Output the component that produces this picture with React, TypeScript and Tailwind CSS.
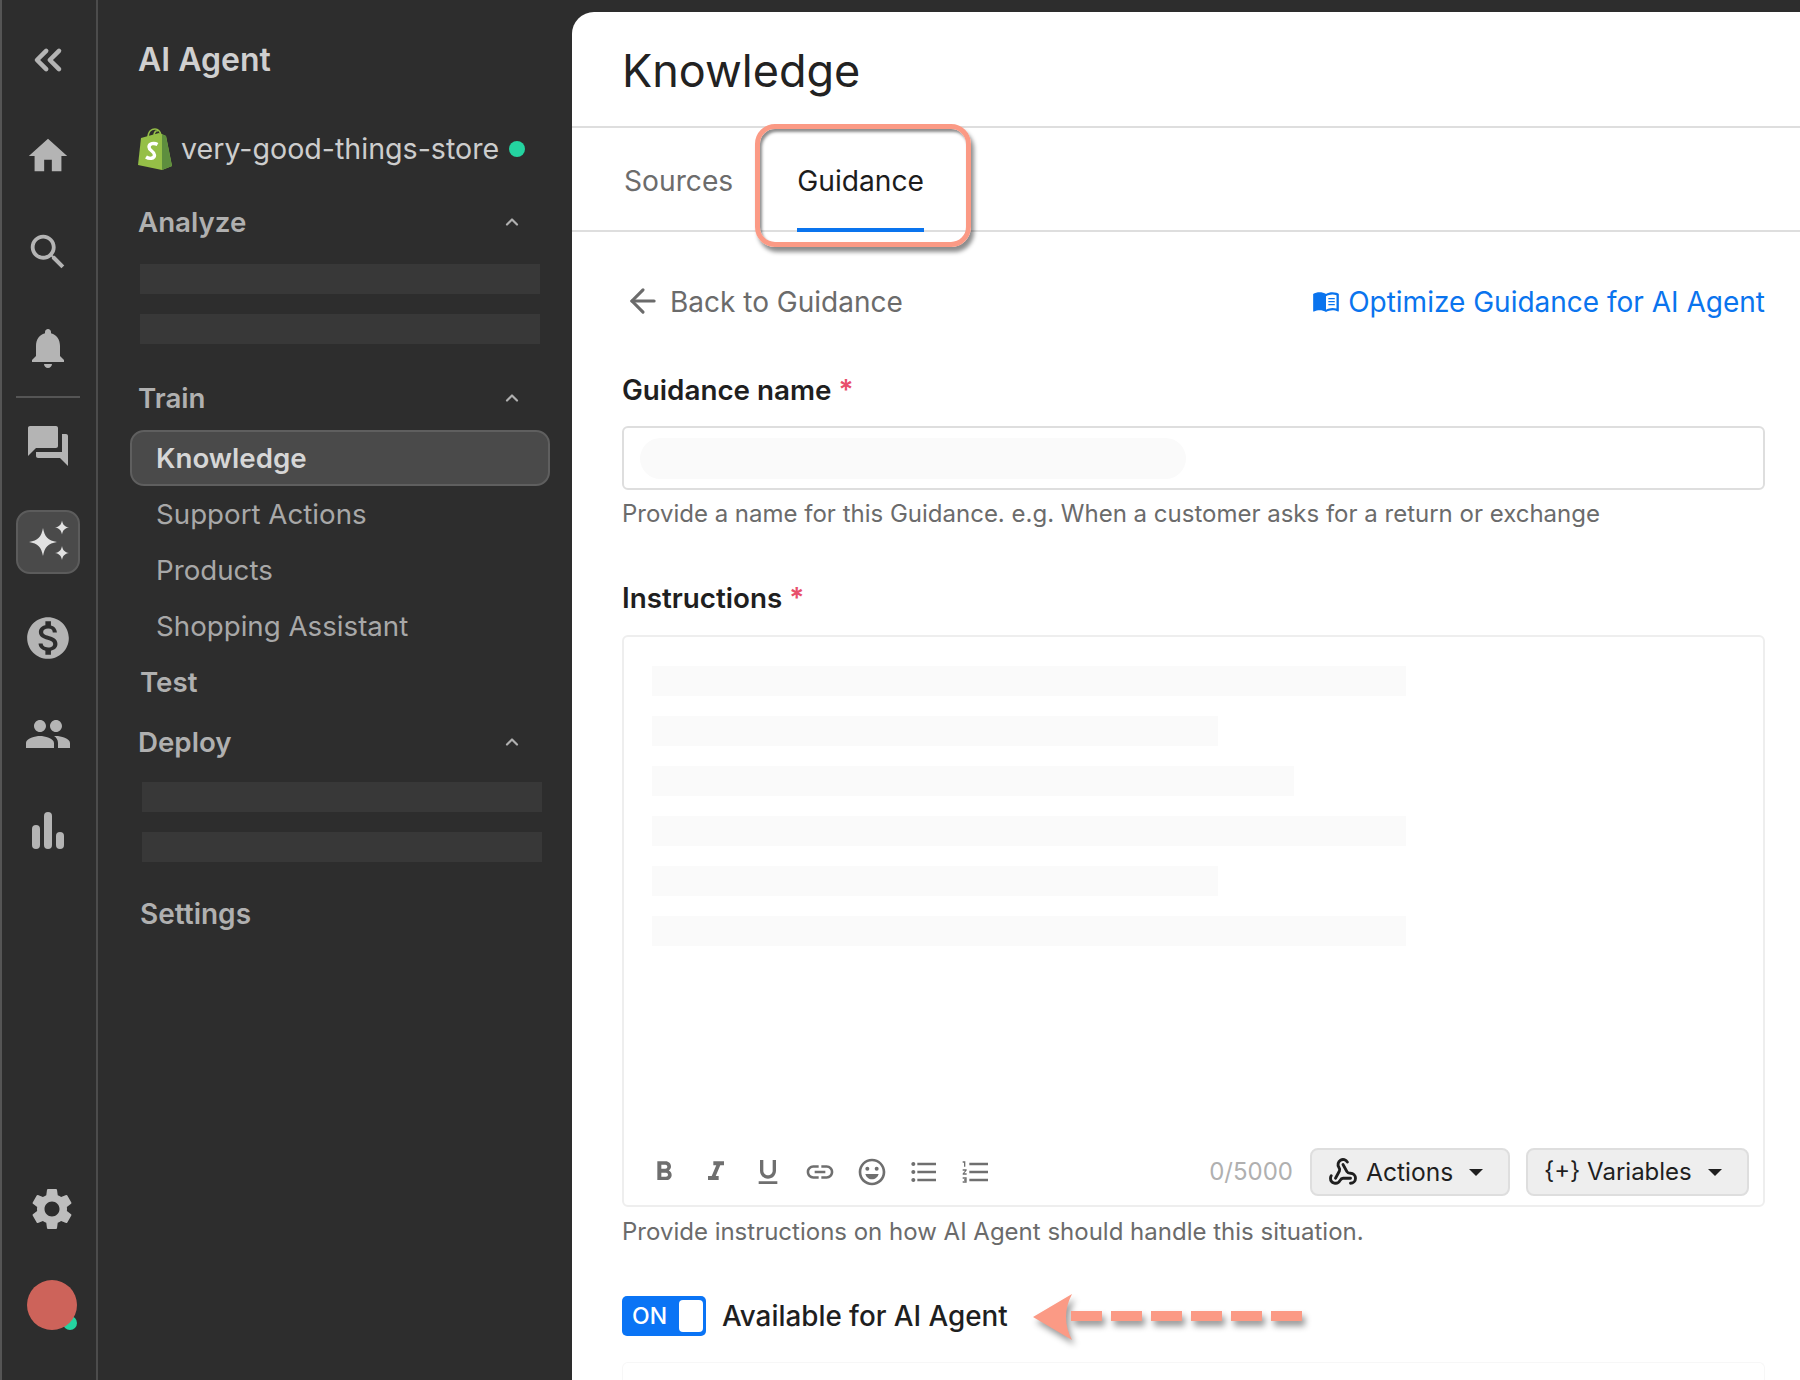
import { ChevronUp, Webhook, ArrowLeft, ChevronsLeft } from "lucide-react";

const P = ({ d, className }: { d: string; className: string }) => (
  <svg viewBox="0 0 24 24" fill="currentColor" className={className}>
    <path d={d} />
  </svg>
);

const icons = {
  home: "M10 20v-6h4v6h5v-8h3L12 3 2 12h3v8z",
  search:
    "M15.5 14h-.79l-.28-.27C15.41 12.59 16 11.11 16 9.5 16 5.91 13.09 3 9.5 3S3 5.91 3 9.5 5.91 16 9.5 16c1.61 0 3.09-.59 4.23-1.57l.27.28v.79l5 4.99L20.49 19l-4.99-5zm-6 0C7.01 14 5 11.99 5 9.5S7.01 5 9.5 5 14 7.01 14 9.5 11.99 14 9.5 14z",
  bell: "M12 22c1.1 0 2-.9 2-2h-4c0 1.1.89 2 2 2zm6-6v-5c0-3.07-1.64-5.64-4.5-6.32V4c0-.83-.67-1.5-1.5-1.5s-1.5.67-1.5 1.5v.68C7.63 5.36 6 7.92 6 11v5l-2 2v1h16v-1l-2-2z",
  forum:
    "M21 6h-2v9H6v2c0 .55.45 1 1 1h11l4 4V7c0-.55-.45-1-1-1zm-4 6V3c0-.55-.45-1-1-1H3c-.55 0-1 .45-1 1v14l4-4h10c.55 0 1-.45 1-1z",
  money:
    "M12 2C6.48 2 2 6.48 2 12s4.48 10 10 10 10-4.48 10-10S17.52 2 12 2zm1.41 16.09V20h-2.67v-1.93c-1.71-.36-3.16-1.46-3.27-3.4h1.96c.1 1.05.82 1.87 2.65 1.87 1.96 0 2.4-.98 2.4-1.59 0-.83-.44-1.61-2.67-2.14-2.48-.6-4.18-1.62-4.18-3.67 0-1.72 1.39-2.84 3.11-3.21V4h2.67v1.95c1.86.45 2.79 1.86 2.87 3.39H14.3c-.05-1.11-.64-1.87-2.22-1.87-1.5 0-2.4.68-2.4 1.64 0 .84.65 1.39 2.67 1.91s4.18 1.39 4.18 3.91c-.01 1.83-1.38 2.83-3.12 3.16z",
  people:
    "M16 11c1.66 0 2.99-1.34 2.99-3S17.66 5 16 5c-1.66 0-3 1.34-3 3s1.34 3 3 3zm-8 0c1.66 0 2.99-1.34 2.99-3S9.66 5 8 5C6.34 5 5 6.34 5 8s1.34 3 3 3zm0 2c-2.33 0-7 1.17-7 3.5V19h14v-2.5c0-2.33-4.67-3.5-7-3.5zm8 0c-.29 0-.62.02-.97.05 1.16.84 1.97 1.97 1.97 3.45V19h6v-2.5c0-2.33-4.67-3.5-7-3.5z",
  gear: "M19.14 12.94c.04-.3.06-.61.06-.94 0-.32-.02-.64-.07-.94l2.03-1.58c.18-.14.23-.41.12-.61l-1.92-3.32c-.12-.22-.37-.29-.59-.22l-2.39.96c-.5-.38-1.03-.7-1.62-.94l-.36-2.54c-.04-.24-.24-.41-.48-.41h-3.84c-.24 0-.43.17-.47.41l-.36 2.54c-.59.24-1.13.57-1.62.94l-2.39-.96c-.22-.08-.47 0-.59.22L2.74 8.87c-.12.21-.08.47.12.61l2.03 1.58c-.05.3-.09.63-.09.94s.02.64.07.94l-2.03 1.58c-.18.14-.23.41-.12.61l1.92 3.32c.12.22.37.29.59.22l2.39-.96c.5.38 1.03.7 1.62.94l.36 2.54c.05.24.24.41.48.41h3.84c.24 0 .44-.17.47-.41l.36-2.54c.59-.24 1.13-.56 1.62-.94l2.39.96c.22.08.47 0 .59-.22l1.92-3.32c.12-.22.07-.47-.12-.61l-2.01-1.58zM12 15.6c-1.98 0-3.6-1.62-3.6-3.6s1.62-3.6 3.6-3.6 3.6 1.62 3.6 3.6-1.62 3.6-3.6 3.6z",
  bold: "M15.6 10.79c.97-.67 1.65-1.77 1.65-2.79 0-2.26-1.75-4-4-4H7v14h7.04c2.09 0 3.71-1.7 3.71-3.79 0-1.52-.86-2.82-2.15-3.42zM10 6.5h3c.83 0 1.5.67 1.5 1.5s-.67 1.5-1.5 1.5h-3v-3zm3.5 9H10v-3h3.5c.83 0 1.5.67 1.5 1.5s-.67 1.5-1.5 1.5z",
  italic: "M10 4v3h2.21l-3.42 8H6v3h8v-3h-2.21l3.42-8H18V4z",
  underline:
    "M12 17c3.31 0 6-2.69 6-6V3h-2.5v8c0 1.93-1.57 3.5-3.5 3.5S8.5 12.93 8.5 11V3H6v8c0 3.31 2.69 6 6 6zm-7 2v2h14v-2H5z",
  link: "M3.9 12c0-1.71 1.39-3.1 3.1-3.1h4V7H7c-2.76 0-5 2.24-5 5s2.24 5 5 5h4v-1.9H7c-1.71 0-3.1-1.39-3.1-3.1zM8 13h8v-2H8v2zm9-6h-4v1.9h4c1.71 0 3.1 1.39 3.1 3.1s-1.39 3.1-3.1 3.1h-4V17h4c2.76 0 5-2.24 5-5s-2.24-5-5-5z",
  emoji:
    "M11.99 2C6.47 2 2 6.48 2 12s4.47 10 9.99 10C17.52 22 22 17.52 22 12S17.52 2 11.99 2zM12 20c-4.42 0-8-3.58-8-8s3.58-8 8-8 8 3.58 8 8-3.58 8-8 8zM8.5 11a1.5 1.5 0 1 0 0-3 1.5 1.5 0 0 0 0 3zm7 0a1.5 1.5 0 1 0 0-3 1.5 1.5 0 0 0 0 3zM7 13.5h10c-.6 2.3-2.6 4-5 4s-4.4-1.7-5-4z",
  ul: "M4 10.5c-.83 0-1.5.67-1.5 1.5s.67 1.5 1.5 1.5 1.5-.67 1.5-1.5-.67-1.5-1.5-1.5zm0-6c-.83 0-1.5.67-1.5 1.5S3.17 7.5 4 7.5 5.5 6.83 5.5 6 4.83 4.5 4 4.5zm0 12c-.83 0-1.5.68-1.5 1.5s.68 1.5 1.5 1.5 1.5-.68 1.5-1.5-.67-1.5-1.5-1.5zM7 19h14v-2H7v2zm0-6h14v-2H7v2zm0-8v2h14V5H7z",
  ol: "M2 17h2v.5H3v1h1v.5H2v1h3v-4H2v1zm1-9h1V4H2v1h1v3zm-1 3h1.8L2 13.1v.9h3v-1H3.2L5 10.9V10H2v1zm5-6v2h14V5H7zm0 14h14v-2H7v2zm0-6h14v-2H7v2z",
};

const Slot = ({ children }: { children: React.ReactNode }) => (
  <div className="flex h-[96px] items-center justify-center text-[#b4b4b4]">{children}</div>
);

const Rail = () => (
  <div className="flex w-[98px] shrink-0 flex-col items-center border-x-2 border-l-[#555] border-r-[#4c4c4c] pt-3 pb-[27px] pr-[3px]">
    <Slot>
      <ChevronsLeft className="h-[44px] w-[44px]" strokeWidth={2.5} />
    </Slot>
    <Slot>
      <P d={icons.home} className="h-[46px] w-[46px]" />
    </Slot>
    <Slot>
      <P d={icons.search} className="h-[46px] w-[46px]" />
    </Slot>
    <Slot>
      <P d={icons.bell} className="h-[48px] w-[48px]" />
    </Slot>
    <div className="h-[2px] w-[64px] bg-[#555]" />
    <Slot>
      <P d={icons.forum} className="h-[48px] w-[48px]" />
    </Slot>
    <Slot>
      <div className="flex h-[64px] w-[64px] items-center justify-center rounded-[14px] border-2 border-[#5c5c5c] bg-[#4a4a4a] text-[#e2e2e2]">
        <svg viewBox="0 0 48 48" fill="currentColor" className="h-[48px] w-[48px]">
          <path d="M19 10c1.600 9 5 12.400 14 14-9 1.600-12.400 5-14 14-1.600-9-5-12.400-14-14 9-1.600 12.400-5 14-14z" />
          <path d="M38 2.500c.8 4.300 2.700 6.200 7 7-4.300.8-6.200 2.700-7 7-.8-4.300-2.700-6.200-7-7 4.300-.8 6.200-2.700 7-7z" />
          <path d="M38 28c.8 4.300 2.700 6.200 7 7-4.300.8-6.200 2.700-7 7-.8-4.300-2.700-6.200-7-7 4.300-.8 6.200-2.700 7-7z" />
        </svg>
      </div>
    </Slot>
    <Slot>
      <P d={icons.money} className="h-[50px] w-[50px]" />
    </Slot>
    <Slot>
      <P d={icons.people} className="h-[48px] w-[48px]" />
    </Slot>
    <Slot>
      <svg viewBox="0 0 36 40" fill="currentColor" className="h-[40px] w-[36px]">
        <rect x="2" y="15" width="8" height="24" rx="4" />
        <rect x="14" y="2" width="8" height="37" rx="4" />
        <rect x="26" y="22" width="8" height="17" rx="4" />
      </svg>
    </Slot>
    <div className="mt-auto ml-[8px] flex flex-col items-center">
      <div className="flex h-[96px] items-center justify-center text-[#bdbdbd]">
        <P d={icons.gear} className="h-[50px] w-[50px]" />
      </div>
      <div className="flex h-[96px] items-center justify-center">
        <div className="relative h-[50px] w-[50px]">
          <div className="absolute right-0 bottom-0 h-[14px] w-[14px] rounded-full bg-[#24d3a0]" />
          <div className="absolute inset-0 rounded-full bg-[#cd635a]" />
        </div>
      </div>
    </div>
  </div>
);

const Skel = ({ className }: { className: string }) => <div className={`h-[30px] w-[400px] bg-[#383838] ${className}`} />;

const Head = ({ label, className }: { label: string; className: string }) => (
  <div className={`flex h-[36px] w-[386px] items-center justify-between pr-[2px] text-[27.7px] font-semibold text-[#b0b0b0] ${className}`}>
    <span className="pt-[2px]">{label}</span>
    <ChevronUp className="h-[20px] w-[20px]" strokeWidth={2.6} />
  </div>
);

const Sub = ({ label }: { label: string }) => (
  <div className="flex h-[56px] items-center pt-[2px] pl-[18px] text-[27.7px] text-[#a8a8a8]">{label}</div>
);

const Sidebar = () => (
  <div className="w-[474px] shrink-0 pt-[40px] pl-[40px]">
    <div className="flex h-[40px] items-center text-[32px] font-semibold text-[#d0d0d0]">AI Agent</div>
    <div className="mt-[47px] flex h-[44px] items-center text-[28.6px] text-[#cdcdcd]">
      <svg viewBox="0 0 34 42" className="h-[42px] w-[34px]">
        <path d="M3 10 L21 5 L28 8 L34 38 L24 42 L0 37z" fill="#95bf47" />
        <path d="M24 6 L28 8 L34 38 L24 42z" fill="#5e8e3e" />
        <path d="M10 10 C10 3 14 1 17 1 C20 1 22 3 23 7 M16 8 C16 4 18 2 20 3" fill="none" stroke="#95bf47" strokeWidth="1.6" />
        <path d="M19.500 16.500 C16 14.500 11 15.500 11 19 C11 23 16.500 23 16.500 27 C16.500 31 11 31 8 29" fill="none" stroke="#fff" strokeWidth="3.400" />
      </svg>
      <span className="ml-[9px]">very-good-things-store</span>
      <span className="ml-[10px] h-[16px] w-[16px] rounded-full bg-[#24d3a0]" />
    </div>
    <Head label="Analyze" className="mt-[33px]" />
    <Skel className="mt-[24px] ml-[2px]" />
    <Skel className="mt-[20px] ml-[2px]" />
    <Head label="Train" className="mt-[36px]" />
    <div className="mt-[14px] ml-[-8px] flex h-[56px] w-[420px] items-center rounded-[14px] border-2 border-[#5f5f5f] bg-[#4a4a4a] pt-[2px] pl-[24px] text-[27.7px] font-semibold text-[#d6d6d6]">
      Knowledge
    </div>
    <Sub label="Support Actions" />
    <Sub label="Products" />
    <Sub label="Shopping Assistant" />
    <div className="flex h-[56px] items-center pt-[2px] pl-[2px] text-[27.7px] font-semibold text-[#b0b0b0]">Test</div>
    <Head label="Deploy" className="mt-[14px]" />
    <Skel className="mt-[22px] ml-[4px]" />
    <Skel className="mt-[20px] ml-[4px]" />
    <div className="mt-[33px] flex h-[36px] items-center pt-[2px] pl-[2px] text-[28px] font-semibold text-[#b0b0b0]">Settings</div>
  </div>
);

const Tool = ({ d }: { d: string }) => <P d={d} className="h-[32px] w-[32px]" />;

const Req = ({ label, className }: { label: string; className: string }) => (
  <div className={`flex h-[34px] items-center pt-[2px] text-[27.8px] font-semibold text-[#1f1f1f] ${className}`}>
    {label}
    <span className="ml-[7px] text-[#e8506b]">*</span>
  </div>
);

const Line = ({ w }: { w: string }) => <div className={`h-[30px] bg-[#fafafa] ${w}`} />;

const Caret = ({ className }: { className: string }) => (
  <div className={`h-0 w-0 border-x-[7px] border-t-[7px] border-x-transparent border-t-[#1f1f1f] ${className}`} />
);

const Main = () => (
  <div className="relative mt-3 flex-1 rounded-tl-[22px] bg-white">
    <div className="flex h-[116px] items-center border-b-2 border-[#dedede] pt-[3px] pl-[50px] text-[45px] text-[#222]">Knowledge</div>
    <div className="flex h-[104px] items-stretch gap-[64px] border-b-2 border-[#dedede] pl-[52px] text-[28.2px]">
      <div className="flex items-center pt-[5px] text-[#6c6c6c]">Sources</div>
      <div className="relative flex items-center pt-[5px] text-[#1c1c1c]">
        Guidance
        <div className="absolute inset-x-0 bottom-[-2px] h-[4px] bg-[#0a74ee]" />
      </div>
    </div>
    <div className="pt-[49px] pr-[35px] pl-[50px]">
      <div className="flex h-[40px] items-center justify-between text-[28px]">
        <div className="flex items-center text-[#6b6b6b]">
          <ArrowLeft className="mr-[8px] ml-[2px] h-[38px] w-[38px]" strokeWidth={2} />
          <span className="pt-[1px]">Back to Guidance</span>
        </div>
        <div className="flex items-center text-[#0a74ee]">
          <svg viewBox="0 0 24 24" className="mr-[8px] h-[28px] w-[28px]" fill="currentColor">
            <path d="M21 5c-1.110-.35-2.330-.5-3.500-.5-1.950 0-4.050.4-5.500 1.500-1.450-1.100-3.550-1.500-5.500-1.500S2.450 4.900 1 6v14.650c0 .25.25.5.5.5.1 0 .15-.05.25-.05C3.100 20.450 5.050 20 6.500 20c1.950 0 4.050.4 5.500 1.500 1.350-.85 3.800-1.500 5.500-1.500 1.650 0 3.350.3 4.750 1.050.1.05.15.05.25.05.25 0 .5-.25.5-.5V6c-.6-.45-1.250-.75-2-1zm0 13.500c-1.100-.35-2.300-.5-3.500-.5-1.700 0-4.150.65-5.500 1.500V8c1.350-.85 3.800-1.500 5.500-1.500 1.200 0 2.400.15 3.500.5v11.500z" />
            <path d="M14 9.400h5.500v1H14zM14 12h5.500v1H14zM14 14.600h5.500v1H14z" />
          </svg>
          <span className="pt-[1px]">Optimize Guidance for AI Agent</span>
        </div>
      </div>
      <Req label="Guidance name" className="mt-[52px]" />
      <div className="mt-[19px] flex h-[64px] items-center rounded-[6px] border-2 border-[#dedede] px-[16px]">
        <div className="h-[41px] w-[546px] rounded-full bg-[#fafafa]" />
      </div>
      <div className="mt-[8px] flex h-[32px] items-center text-[24px] text-[#6b6b6b]">
        Provide a name for this Guidance. e.g. When a customer asks for a return or exchange
      </div>
      <Req label="Instructions" className="mt-[51px]" />
      <div className="mt-[20px] flex h-[572px] flex-col rounded-[6px] border-2 border-[#eeeeee] pt-[29px] pr-[14px] pb-[9px] pl-[28px]">
        <div className="flex flex-col gap-[20px]">
          <Line w="w-[754px]" />
          <Line w="w-[566px]" />
          <Line w="w-[642px]" />
          <Line w="w-[754px]" />
          <Line w="w-[566px]" />
          <Line w="w-[754px]" />
        </div>
        <div className="mt-auto flex items-center">
          <div className="ml-[-4px] flex items-center gap-[20px] text-[#6f6f6f]">
            <Tool d={icons.bold} />
            <Tool d={icons.italic} />
            <Tool d={icons.underline} />
            <Tool d={icons.link} />
            <Tool d={icons.emoji} />
            <Tool d={icons.ul} />
            <Tool d={icons.ol} />
          </div>
          <div className="ml-auto text-[24px] text-[#b0b0b0]">0/5000</div>
          <div className="ml-[17px] flex h-[48px] w-[200px] items-center rounded-[8px] border-2 border-[#dedede] bg-[#eeeeee] pl-[16px] text-[24.6px] text-[#1f1f1f]">
            <Webhook className="mr-[8px] h-[30px] w-[30px]" strokeWidth={2.3} />
            Actions
            <Caret className="ml-[16px]" />
          </div>
          <div className="ml-[16px] flex h-[48px] w-[223px] items-center rounded-[8px] border-2 border-[#dedede] bg-[#eeeeee] pl-[16px] text-[24px] text-[#1f1f1f]">
            {"{+} Variables"}
            <Caret className="ml-[16px]" />
          </div>
        </div>
      </div>
      <div className="mt-[9px] flex h-[32px] items-center text-[24px] text-[#6b6b6b]">
        Provide instructions on how AI Agent should handle this situation.
      </div>
      <div className="mt-[48px] flex h-[40px] items-center">
        <div className="flex h-[40px] w-[84px] items-center justify-between rounded-[5px] bg-[#0a74f5] pr-[3px] pl-[10px] text-[23px] font-medium text-white">
          ON
          <div className="h-[32px] w-[24px] rounded-[4px] bg-white" />
        </div>
        <span className="ml-[16px] pt-[2px] text-[27.8px] font-medium text-[#1f1f1f]">Available for AI Agent</span>
      </div>
      <div className="mt-[26px] h-[40px] rounded-t-[6px] border-x border-t border-[#f7f7f7]" />
    </div>
    <div className="absolute top-[112px] left-[183px] h-[123px] w-[216px] rounded-[20px] border-[5px] border-[#fb9a85] shadow-[3px_5px_4px_rgba(0,0,0,0.45),inset_2px_3px_3px_rgba(0,0,0,0.45)]" />
    <svg viewBox="0 0 280 60" className="absolute top-[1275px] left-[458px] h-[60px] w-[280px] drop-shadow-[3px_5px_3px_rgba(0,0,0,0.4)]">
      <path d="M3 30 L42 7 Q30 30 42 53z" fill="#fb9a85" />
      <path d="M41 24h31v10H41zM81 24h31v10H81zM121 24h31v10H121zM161 24h31v10H161zM201 24h31v10H201zM241 24h31v10H241z" fill="#fb9a85" />
    </svg>
  </div>
);

export default function App() {
  return (
    <div className="flex h-[1380px] w-[1800px] overflow-hidden bg-[#2d2d2d] font-['Inter',sans-serif]">
      <Rail />
      <Sidebar />
      <Main />
    </div>
  );
}
